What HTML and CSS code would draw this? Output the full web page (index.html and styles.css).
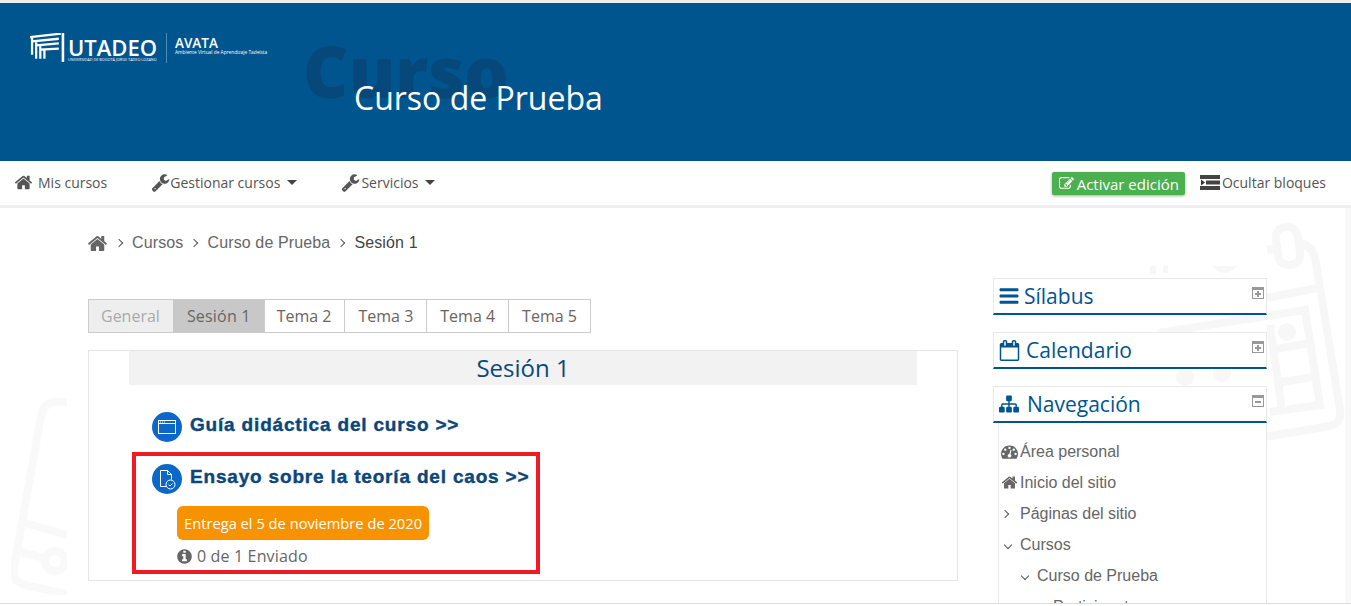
FILE: index.html
```html
<!DOCTYPE html>
<html lang="es">
<head>
    <meta charset="UTF-8">
    <meta name="viewport" content="width=device-width, initial-scale=1.0">
    <title>Curso de Prueba - Sesión 1</title>
    <link rel="stylesheet" href="styles.css">
</head>
<body>

    <!-- icon sprite -->
    <svg class="sprite" xmlns="http://www.w3.org/2000/svg">
        <symbol id="i-home" viewBox="0 0 1792 1792"><path d="M1472 992v480q0 26-19 45t-45 19h-384v-384H768v384H384q-26 0-45-19t-19-45V992q0-1 .5-3t.5-3l575-474 575 474q1 2 1 6zm223-69l-62 74q-8 9-21 11h-3q-13 0-21-7L896 424l-692 577q-12 8-24 7-13-2-21-11l-62-74q-8-10-7-23.500t11-21.500l719-599q32-26 76-26t76 26l244 204V288q0-14 9-23t23-9h192q14 0 23 9t9 23v408l219 182q10 8 11 21.500t-7 23.500z"/></symbol>
        <symbol id="i-wrench" viewBox="0 0 1792 1792"><path d="M448 1472q0-26-19-45t-45-19-45 19-19 45 19 45 45 19 45-19 19-45zm644-420l-682 682q-37 37-90 37-52 0-91-37l-106-108q-38-36-38-90 0-53 38-91l681-681q39 98 114.500 173.500t173.500 114.500zm634-435q0 39-23 106-47 134-164.500 217.500t-258.500 83.500q-185 0-316.500-131.500t-131.500-316.500 131.500-316.500 316.500-131.500q58 0 121.500 16.500t107.500 46.500q16 11 16 28t-16 28l-293 169v224l193 107q5-3 79-48.500t135.500-81 70.500-35.500q15 0 23.500 10t8.500 25z"/></symbol>
        <symbol id="i-bars" viewBox="0 0 1792 1792"><path d="M1664 1344v128q0 26-19 45t-45 19H192q-26 0-45-19t-19-45v-128q0-26 19-45t45-19h1408q26 0 45 19t19 45zm0-512v128q0 26-19 45t-45 19H192q-26 0-45-19t-19-45V832q0-26 19-45t45-19h1408q26 0 45 19t19 45zm0-512v128q0 26-19 45t-45 19H192q-26 0-45-19t-19-45V320q0-26 19-45t45-19h1408q26 0 45 19t19 45z"/></symbol>
        <symbol id="i-calendar" viewBox="0 0 1792 1792"><path d="M192 1664h1408V640H192v1024zM576 448V160q0-14-9-23t-23-9h-64q-14 0-23 9t-9 23v288q0 14 9 23t23 9h64q14 0 23-9t9-23zm768 0V160q0-14-9-23t-23-9h-64q-14 0-23 9t-9 23v288q0 14 9 23t23 9h64q14 0 23-9t9-23zm384-64v1280q0 52-38 90t-90 38H192q-52 0-90-38t-38-90V384q0-52 38-90t90-38h128v-96q0-66 47-113T480 0h64q66 0 113 47t47 113v96h384v-96q0-66 47-113t113-47h64q66 0 113 47t47 113v96h128q52 0 90 38t38 90z"/></symbol>
        <symbol id="i-sitemap" viewBox="0 0 1792 1792"><path d="M1792 1248v320q0 40-28 68t-68 28h-320q-40 0-68-28t-28-68v-320q0-40 28-68t68-28h96V960H960v192h96q40 0 68 28t28 68v320q0 40-28 68t-68 28H736q-40 0-68-28t-28-68v-320q0-40 28-68t68-28h96V960H320v192h96q40 0 68 28t28 68v320q0 40-28 68t-68 28H96q-40 0-68-28t-28-68v-320q0-40 28-68t68-28h96V960q0-52 38-90t90-38h512V640h-96q-40 0-68-28t-28-68V224q0-40 28-68t68-28h320q40 0 68 28t28 68v320q0 40-28 68t-68 28h-96v192h512q52 0 90 38t38 90v192h96q40 0 68 28t28 68z"/></symbol>
        <symbol id="i-info" viewBox="0 0 1792 1792"><path d="M1152 1376v-160q0-14-9-23t-23-9h-96V672q0-14-9-23t-23-9H672q-14 0-23 9t-9 23v160q0 14 9 23t23 9h96v320h-96q-14 0-23 9t-9 23v160q0 14 9 23t23 9h448q14 0 23-9t9-23zM1024 480V320q0-14-9-23t-23-9H800q-14 0-23 9t-9 23v160q0 14 9 23t23 9h192q14 0 23-9t9-23zm640 416q0 209-103 385.500T1281.500 1561 896 1664t-385.500-103T231 1281.500 128 896t103-385.500T510.500 231 896 128t385.500 103T1561 510.500 1664 896z"/></symbol>
        <symbol id="i-dash" viewBox="0 0 1792 1792"><path d="M384 1152q0-53-37.500-90.500T256 1024t-90.500 37.500T128 1152t37.500 90.500T256 1280t90.500-37.500T384 1152zm192-448q0-53-37.500-90.500T448 576t-90.500 37.500T320 704t37.500 90.500T448 832t90.500-37.500T576 704zm428 481l101-382q6-26-7.500-48.500T1059 725t-48 6.500-30 39.500l-101 382q-60 5-107 43.500t-63 98.500q-20 77 20 146t117 89 146-20 89-117q16-60-6-117t-72-91zm660-33q0-53-37.500-90.500T1536 1024t-90.500 37.500-37.500 90.500 37.500 90.500 90.500 37.500 90.500-37.500 37.500-90.500zm-640-640q0-53-37.500-90.500T896 384t-90.500 37.500T768 512t37.500 90.500T896 640t90.500-37.500T1024 512zm448 192q0-53-37.500-90.500T1344 576t-90.500 37.500T1216 704t37.500 90.500T1344 832t90.500-37.500T1472 704zm320 448q0 261-141 483-19 29-54 29H195q-35 0-54-29Q0 1414 0 1152q0-182 71-348t191-286 286-191 348-71 348 71 286 191 191 286 71 348z"/></symbol>
        <symbol id="i-edit" viewBox="0 0 1792 1792"><path d="M888 1184l116-116-152-152-116 116v56h96v96h56zm440-720q-16-16-33 1L945 815q-17 17-1 33t33-1l350-350q17-17 1-33zm80 594v190q0 119-84.500 203.500T1120 1536H288q-119 0-203.500-84.500T0 1248V416q0-119 84.500-203.500T288 128h832q63 0 117 25 15 7 18 23 3 17-9 29l-49 49q-14 14-32 8-23-6-45-6H288q-66 0-113 47t-47 113v832q0 66 47 113t113 47h832q66 0 113-47t47-113v-126q0-13 9-22l64-64q15-15 35-7t20 29zm-96-738l288 288-672 672H640V992zm444 132l-92 92-288-288 92-92q28-28 68-28t68 28l152 152q28 28 28 68t-28 68z"/></symbol>
        <symbol id="i-plus-box" viewBox="0 0 12 12"><path fill="#999" d="M0 0h12v12H0z"/><path fill="#fff" d="M1 3h10v8H1z"/><path fill="#999" d="M5 4h2v2h2v2H7v2H5V8H3V6h2z"/></symbol>
        <symbol id="i-minus-box" viewBox="0 0 12 12"><path fill="#999" d="M0 0h12v12H0z"/><path fill="#fff" d="M1 3h10v8H1z"/><path fill="#999" d="M3 6h6v2H3z"/></symbol>
    </svg>

    <!-- faint background drawings -->
    <svg class="watermark watermark-left" viewBox="0 0 56 200" xmlns="http://www.w3.org/2000/svg">
        <g fill="none" stroke="#f9f9f9" stroke-width="8">
            <path d="M56 7H46Q32 7 30 21L3 172Q0 188 18 191L56 199"/>
            <path d="M14 128L56 140M9 157L34 163"/>
            <circle cx="44" cy="166" r="10"/>
        </g>
    </svg>
    <svg class="watermark watermark-right" viewBox="0 0 260 383" xmlns="http://www.w3.org/2000/svg">
        <g fill="none" stroke="#f7f7f7" stroke-width="8">
            <path d="M215 20Q228 22 231 40L255 187Q257 200 245 203L180 214 30 238"/>
            <path d="M182 75L232 65"/>
            <path d="M73 110L220 87 235 182 185 189"/>
            <path d="M185 102L197 187M185 127L225 120M190 160L228 154"/>
            <path d="M182 27L192 25"/>
            <rect x="192" y="4" width="22" height="38" rx="10" transform="rotate(-8 203 23)"/>
        </g>
        <g fill="#f7f7f7">
            <circle cx="202" cy="109" r="9"/>
            <circle cx="137" cy="150" r="9"/>
            <circle cx="100" cy="154" r="9"/>
            <path d="M127 43h25q-12 14-25 0zM65 43h6v8h-6zM78 43h5v7h-5z"/>
        </g>
    </svg>

    <header class="site-header">
        <div class="logo">
            <svg class="logo-mark" viewBox="0 0 34 28" xmlns="http://www.w3.org/2000/svg">
                <g fill="none" stroke="#fff">
                    <path stroke-width="2.200" d="M0 4L30 .5M2 8L28 5.500M6 12L28 10M10 16L28 15M2 4V21M6 8V25M10 12V25M14 16V25"/>
                    <path stroke-width="2.500" d="M32 0V28"/>
                </g>
            </svg>
            <div class="logo-name">
                <span class="logo-title">UTADEO</span>
                <span class="logo-sub">UNIVERSIDAD DE BOGOTÁ JORGE TADEO LOZANO</span>
            </div>
            <div class="logo-name logo-avata">
                <span class="logo-title">AVATA</span>
                <span class="logo-sub">Ambiente Virtual de Aprendizaje Tadeísta</span>
            </div>
        </div>
        <div class="course-title">
            <span class="course-ghost">Curso</span>
            <h1>Curso de Prueba</h1>
        </div>
    </header>

    <nav class="top-nav">
        <a class="nav-item nav-home"><svg class="fa"><use href="#i-home"/></svg>Mis cursos</a>
        <a class="nav-item nav-manage"><svg class="fa"><use href="#i-wrench"/></svg>Gestionar cursos<span class="caret"></span></a>
        <a class="nav-item nav-services"><svg class="fa"><use href="#i-wrench"/></svg>Servicios<span class="caret"></span></a>
        <div class="nav-right">
            <a class="edit-button"><svg class="fa"><use href="#i-edit"/></svg>Activar edición</a>
            <a class="nav-item hide-blocks">
                <svg class="hide-icon" viewBox="0 0 20 15" xmlns="http://www.w3.org/2000/svg">
                    <path fill="#444" d="M0 0h20v4H0zM6 5.500h14v4H6zM0 11h20v4H0z"/>
                    <path fill="#333" d="M1 4.500l4 3-4 3z"/>
                </svg>Ocultar bloques
            </a>
        </div>
    </nav>

    <div class="page">
        <div class="breadcrumb">
            <svg class="fa"><use href="#i-home"/></svg>
            <span class="sep"></span>
            <a>Cursos</a>
            <span class="sep"></span>
            <a>Curso de Prueba</a>
            <span class="sep"></span>
            <a class="current">Sesión 1</a>
        </div>

        <div class="columns">
            <main class="main-col">
                <ul class="tabs">
                    <li class="tab tab-disabled">General</li>
                    <li class="tab tab-active">Sesión 1</li>
                    <li class="tab">Tema 2</li>
                    <li class="tab">Tema 3</li>
                    <li class="tab">Tema 4</li>
                    <li class="tab">Tema 5</li>
                </ul>

                <section class="section-card">
                    <h2 class="section-title">Sesión 1</h2>

                    <div class="activity activity-first">
                        <svg class="activity-icon" viewBox="0 0 30 30" xmlns="http://www.w3.org/2000/svg">
                            <circle cx="15" cy="15" r="15" fill="#0b68c9"/>
                            <rect x="6.500" y="8.500" width="17" height="13" fill="none" stroke="#fff"/>
                            <path fill="none" stroke="#fff" d="M6.500 11.500h17"/>
                            <path fill="#fff" d="M8 9.500h1v1H8zM10 9.500h1v1h-1zM12 9.500h1v1h-1z"/>
                        </svg>
                        <a class="activity-link">Guía didáctica del curso &gt;&gt;</a>
                    </div>

                    <div class="highlight">
                        <div class="activity">
                            <svg class="activity-icon" viewBox="0 0 30 30" xmlns="http://www.w3.org/2000/svg">
                                <circle cx="15" cy="15" r="15" fill="#0b68c9"/>
                                <path fill="none" stroke="#fff" d="M8.500 6.500h7l4 4v5M15.500 6.500v4h4M8.500 6.500v16h6"/>
                                <circle cx="18.500" cy="20.500" r="4.500" fill="#0b68c9" stroke="#fff"/>
                                <path fill="none" stroke="#fff" d="M16.500 20.500l1.500 1.500 2.500-2.500"/>
                            </svg>
                            <a class="activity-link">Ensayo sobre la teoría del caos &gt;&gt;</a>
                        </div>
                        <span class="due-badge">Entrega el 5 de noviembre de 2020</span>
                        <p class="submitted"><svg class="fa"><use href="#i-info"/></svg>0 de 1 Enviado</p>
                    </div>
                </section>
            </main>

            <aside class="side-col">
                <div class="block">
                    <div class="block-head">
                        <svg class="fa icon-bars"><use href="#i-bars"/></svg>
                        <h3>Sílabus</h3>
                        <svg class="block-toggle"><use href="#i-plus-box"/></svg>
                    </div>
                </div>
                <div class="block">
                    <div class="block-head">
                        <svg class="fa icon-calendar"><use href="#i-calendar"/></svg>
                        <h3>Calendario</h3>
                        <svg class="block-toggle"><use href="#i-plus-box"/></svg>
                    </div>
                </div>
                <div class="block">
                    <div class="block-head">
                        <svg class="fa icon-sitemap"><use href="#i-sitemap"/></svg>
                        <h3>Navegación</h3>
                        <svg class="block-toggle"><use href="#i-minus-box"/></svg>
                    </div>
                    <ul class="tree">
                        <li><svg class="fa"><use href="#i-dash"/></svg>Área personal</li>
                        <li><svg class="fa"><use href="#i-home"/></svg>Inicio del sitio</li>
                        <li><span class="sep tree-sep tree-closed"></span>Páginas del sitio</li>
                        <li><span class="sep sep-open tree-sep"></span>Cursos</li>
                        <li class="level-2"><span class="sep sep-open tree-sep"></span>Curso de Prueba</li>
                        <li class="level-3"><span class="sep sep-open tree-sep"></span>Participantes</li>
                    </ul>
                </div>
            </aside>
        </div>
    </div>

    <div class="edge-right"></div>
    <div class="edge-bottom"></div>

</body>
</html>
```

FILE: styles.css
```css
/* General Styles */
html, body {
    height: 606px;
    overflow: hidden;
}

body {
    position: relative;
    margin: 0;
    border-top: 3px solid #eee;
    box-sizing: border-box;
    background-color: #fff;
    font-family: 'Open Sans', sans-serif;
    color: #666;
}

ul {
    list-style: none;
    margin: 0;
    padding: 0;
}

.sprite {
    display: none;
}

.fa {
    width: 1em;
    height: 1em;
    fill: currentColor;
    flex-shrink: 0;
}

/* Background drawings */
.watermark {
    position: absolute;
    z-index: 0;
}

.watermark-left {
    left: 11px;
    top: 392px;
    width: 56px;
    height: 200px;
}

.watermark-right {
    left: 1085px;
    top: 220px;
    width: 260px;
    height: 383px;
}

/* Header */
.site-header {
    position: relative;
    height: 158px;
    background-color: #00558f;
    padding: 30px 0 0 30px;
    box-sizing: border-box;
}

.logo {
    display: flex;
    align-items: flex-start;
    color: #fff;
}

.logo-mark {
    width: 35px;
    height: 29px;
    margin-right: 3px;
}

.logo-name {
    display: flex;
    flex-direction: column;
    padding: 3px 9px 0 0;
    border-right: 1px solid #4f8bb4;
    height: 27px;
}

.logo-title {
    font-size: 22px;
    font-weight: 600;
    line-height: 22px;
}

.logo-sub {
    margin-top: -1px;
    font-size: 3.800px;
    line-height: 5px;
    white-space: nowrap;
}

.logo-avata {
    border-right: 0;
    padding: 3px 0 0 8px;
}

.logo-avata .logo-title {
    font-size: 13.500px;
    line-height: 14px;
    font-weight: 600;
}

.logo-avata .logo-sub {
    margin-top: 0;
    font-size: 4.800px;
}

.course-title {
    position: relative;
    margin: 15px 0 0 324px;
}

.course-ghost {
    position: absolute;
    left: -51px;
    top: -52px;
    font-size: 70px;
    line-height: 90px;
    font-weight: 800;
    color: #07487a;
}

.course-title h1 {
    position: relative;
    margin: 0;
    font-size: 32px;
    line-height: 40px;
    font-weight: 400;
    color: #fff;
}

/* Top navigation */
.top-nav {
    position: relative;
    display: flex;
    align-items: center;
    height: 47px;
    padding: 0 25px 2px 15px;
    box-sizing: border-box;
    background-color: #fff;
    border-bottom: 3px solid #eee;
    font-size: 14px;
}

.nav-item {
    display: flex;
    align-items: center;
    color: #555;
}

.nav-item .fa {
    width: 19px;
    height: 19px;
    margin-left: -1px;
}

.nav-home {
    margin-right: 45px;
}

.nav-home .fa {
    margin-right: 5px;
}

.nav-manage {
    margin-right: 45px;
}

.nav-services .fa {
    margin-right: 1px;
}

.nav-services .caret {
    margin-left: 6px;
}

.caret {
    width: 0;
    height: 0;
    margin-left: 7px;
    border-left: 5px solid transparent;
    border-right: 5px solid transparent;
    border-top: 5px solid #444;
}

.nav-right {
    display: flex;
    align-items: center;
    margin-left: auto;
}

.edit-button {
    display: flex;
    align-items: center;
    height: 23px;
    padding: 0 6px 0 7px;
    margin: 3px 15px 0 0;
    background-color: #4caf50;
    border-radius: 2px;
    box-shadow: 0 1px 3px rgba(0, 0, 0, 0.35);
    color: #fff;
    font-size: 15px;
}

.edit-button .fa {
    width: 15px;
    height: 15px;
    margin-right: 3px;
}

.hide-blocks {
    margin-top: 1px;
}

.hide-icon {
    width: 20px;
    height: 15px;
    margin-right: 2px;
}

/* Page */
.page {
    position: relative;
    padding-left: 88px;
}

.breadcrumb {
    display: flex;
    align-items: center;
    height: 20px;
    padding-top: 25px;
    font-family: 'Liberation Sans', sans-serif;
    font-size: 16px;
    letter-spacing: 0.13px;
    color: #666;
}

.breadcrumb .fa {
    width: 21px;
    height: 21px;
    margin-left: -1px;
}

.sep {
    display: inline-block;
    width: 5px;
    height: 5px;
    margin: 0 10px 0 8px;
    border-top: 1px solid #555;
    border-right: 1px solid #555;
    transform: rotate(45deg);
}

.sep-open {
    transform: rotate(135deg);
}

.breadcrumb .current {
    color: #444;
}

.columns {
    display: flex;
    gap: 35px;
    margin-top: 25px;
}

.main-col {
    width: 870px;
    padding-top: 21px;
}

/* Tabs */
.tabs {
    display: flex;
    width: max-content;
    border: 1px solid #ccc;
    margin-bottom: 17px;
}

.tab {
    height: 32px;
    line-height: 32px;
    padding: 0 13px;
    border-left: 1px solid #ccc;
    font-size: 16px;
    color: #6b6461;
}

.tab:first-child {
    border-left: 0;
    padding: 0 13px 0 12px;
}

.tab-disabled {
    background-color: #eee;
    color: #aaa;
}

.tab-active {
    background-color: #c8c8c8;
    border-left: 0;
    padding: 0 13px 0 14px;
    letter-spacing: 0.2px;
    color: #666;
}

.tab-active + .tab {
    padding-left: 12px;
}

/* Section */
.section-card {
    height: 231px;
    border: 1px solid #e5e5e5;
    box-sizing: border-box;
    background-color: #fff;
}

.section-title {
    margin: 0 40px;
    height: 34px;
    line-height: 34px;
    background-color: #f2f2f2;
    text-align: center;
    font-size: 24px;
    font-weight: 400;
    color: #0b4a7a;
}

.activity {
    display: flex;
    align-items: flex-start;
}

.activity-first {
    margin: 27px 0 0 63px;
}

.activity-icon {
    width: 30px;
    height: 30px;
    margin-right: 8px;
    flex-shrink: 0;
}

.activity-link {
    font-family: 'Liberation Sans', sans-serif;
    font-size: 19px;
    line-height: 26px;
    font-weight: 700;
    letter-spacing: 0.82px;
    -webkit-text-stroke: 0.4px #0b4679;
    white-space: nowrap;
    color: #0b4679;
}

.highlight {
    width: 408px;
    height: 122px;
    margin: 10px 0 0 43px;
    padding: 8px 0 0 16px;
    border: 4px solid #ed1c24;
    box-sizing: border-box;
}

.due-badge {
    display: inline-block;
    margin: 12px 0 0 25px;
    padding: 0 7px;
    height: 34px;
    line-height: 34px;
    border-radius: 6px;
    background-color: #f79300;
    color: #fff;
    font-size: 14.700px;
}

.submitted {
    display: flex;
    align-items: center;
    margin: 5px 0 0 25px;
    font-size: 16px;
    line-height: 22px;
    letter-spacing: 0.15px;
    color: #666;
}

.submitted .fa {
    width: 17px;
    height: 17px;
    margin: 0 4px 0 -1px;
}

/* Side blocks */
.side-col {
    width: 274px;
}

.block {
    margin-bottom: 17px;
}

.block-head {
    display: flex;
    align-items: center;
    height: 37px;
    padding: 0 2px 0 5px;
    border: 1px solid #e8e8e8;
    border-bottom: 2px solid #00558f;
    box-sizing: border-box;
    background-color: #fff;
    color: #00558f;
}

.block-head h3 {
    margin: 0;
    font-size: 21px;
    font-weight: 400;
}

.block-head .icon-bars {
    width: 22px;
    height: 22px;
    margin: 0 4px 0 -1px;
}

.block-head .icon-calendar {
    width: 21px;
    height: 21px;
    margin: 0 6px 0 0;
}

.block-head .icon-sitemap {
    width: 20px;
    height: 20px;
    margin: 0 8px 0 0;
}

.block-toggle {
    width: 12px;
    height: 12px;
    margin: -7px 0 0 auto;
}

.tree {
    margin-left: 5px;
    padding: 13px 0 0 2px;
    border: 1px solid #e8e8e8;
    border-top: 0;
    background-color: #fff;
    font-family: 'Liberation Sans', sans-serif;
    font-size: 16px;
    color: #666;
}

.tree li {
    display: flex;
    align-items: center;
    height: 31px;
}

.tree .fa {
    width: 17px;
    height: 17px;
    margin-right: 2px;
}

.tree-sep {
    flex-shrink: 0;
    margin: 0 9px 0 4px;
}

.tree-closed {
    margin: 0 12px 0 1px;
}

.tree .level-2 {
    padding-left: 17px;
}

.tree .level-3 {
    padding-left: 33px;
}

/* Window edges */
.edge-right {
    position: absolute;
    top: 205px;
    right: 0;
    bottom: 0;
    width: 6px;
    background-color: #f8f8f8;
}

.edge-bottom {
    position: absolute;
    left: 0;
    right: 0;
    bottom: 0;
    height: 3px;
    background-color: #fff;
    border-top: 1px solid #ddd;
    box-sizing: border-box;
}
```
